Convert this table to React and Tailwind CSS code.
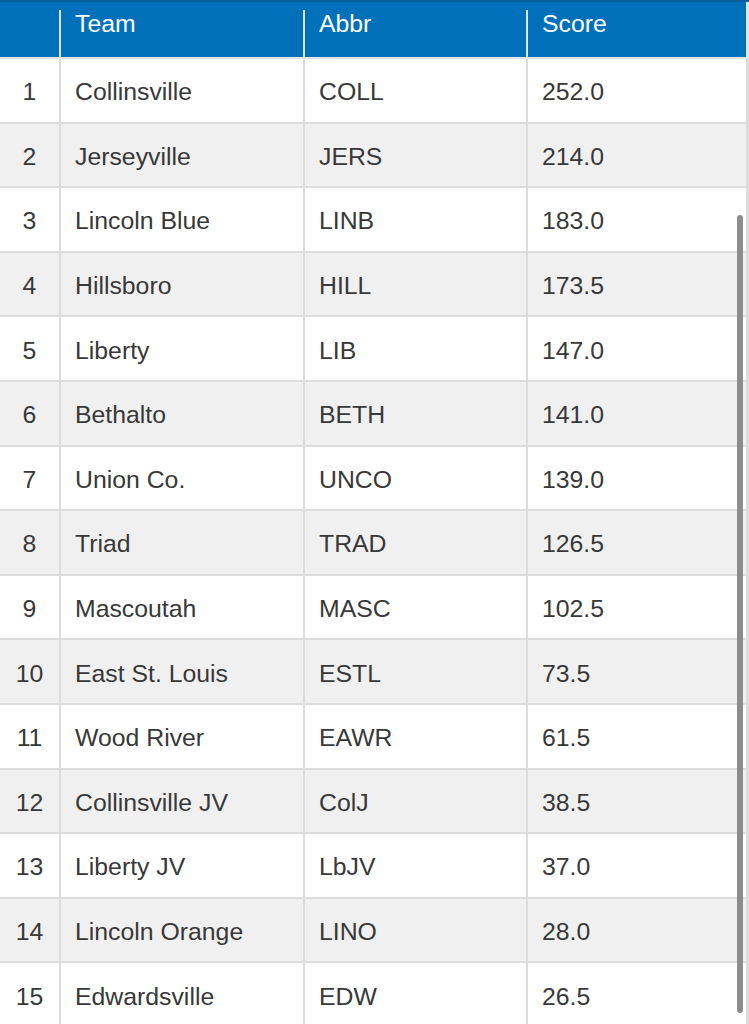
import React from "react";

const TEAMS = [
  ["Collinsville", "COLL", "252.0"],
  ["Jerseyville", "JERS", "214.0"],
  ["Lincoln Blue", "LINB", "183.0"],
  ["Hillsboro", "HILL", "173.5"],
  ["Liberty", "LIB", "147.0"],
  ["Bethalto", "BETH", "141.0"],
  ["Union Co.", "UNCO", "139.0"],
  ["Triad", "TRAD", "126.5"],
  ["Mascoutah", "MASC", "102.5"],
  ["East St. Louis", "ESTL", "73.5"],
  ["Wood River", "EAWR", "61.5"],
  ["Collinsville JV", "ColJ", "38.5"],
  ["Liberty JV", "LbJV", "37.0"],
  ["Lincoln Orange", "LINO", "28.0"],
  ["Edwardsville", "EDW", "26.5"],
];

const App = () => {
  return (
    <div
      className="relative w-[749px] h-[1024px] overflow-hidden bg-white text-[24.8px] text-[#383838]"
      style={{ fontFamily: '"Liberation Sans", Arial, sans-serif' }}
    >
      {/* Header */}
      <div className="border-t-2 border-[#0b5d9c] bg-[#0070bb] border-b-2 border-b-[#dfe5ea]">
        <div className="grid grid-cols-[61px_244px_223px_1fr] h-[55px] text-white">
          <div className="flex flex-col">
            <div className="h-[8px]" />
            <div className="flex-1 border-r-2 border-[#dce6f0]" />
          </div>
          <div className="flex flex-col">
            <div className="h-[8px]" />
            <div className="flex-1 border-r-2 border-[#dce6f0] pl-[14px] leading-[28px]">Team</div>
          </div>
          <div className="flex flex-col">
            <div className="h-[8px]" />
            <div className="flex-1 border-r-2 border-[#dce6f0] pl-[14px] leading-[28px]">Abbr</div>
          </div>
          <div className="flex flex-col border-r-[3px] border-[#dfe5ea]">
            <div className="h-[8px]" />
            <div className="flex-1 pl-[14px] leading-[28px]">Score</div>
          </div>
        </div>
      </div>

      {/* Rows */}
      {TEAMS.map((t, i) => (
        <div
          key={t[1]}
          className={`grid grid-cols-[61px_244px_223px_1fr] h-[64.6px] border-b-2 border-[#dcdcdc] ${
            i % 2 === 1 ? "bg-[#f0f0f0]" : "bg-white"
          }`}
        >
          <div className="flex items-center justify-center pt-[3px] border-r-2 border-[#dcdcdc]">{i + 1}</div>
          <div className="flex items-center pl-[14px] pt-[3px] border-r-2 border-[#dcdcdc]">{t[0]}</div>
          <div className="flex items-center pl-[14px] pt-[3px] border-r-2 border-[#dcdcdc]">{t[1]}</div>
          <div className="flex items-center pl-[14px] pt-[3px] border-r-[3px] border-[#dcdcdc]">{t[2]}</div>
        </div>
      ))}

      {/* Scrollbar */}
      <div className="absolute left-[737px] top-[215px] w-[6px] h-[798px] rounded-full bg-[#8c8c8c]" />
    </div>
  );
};

export default App;
